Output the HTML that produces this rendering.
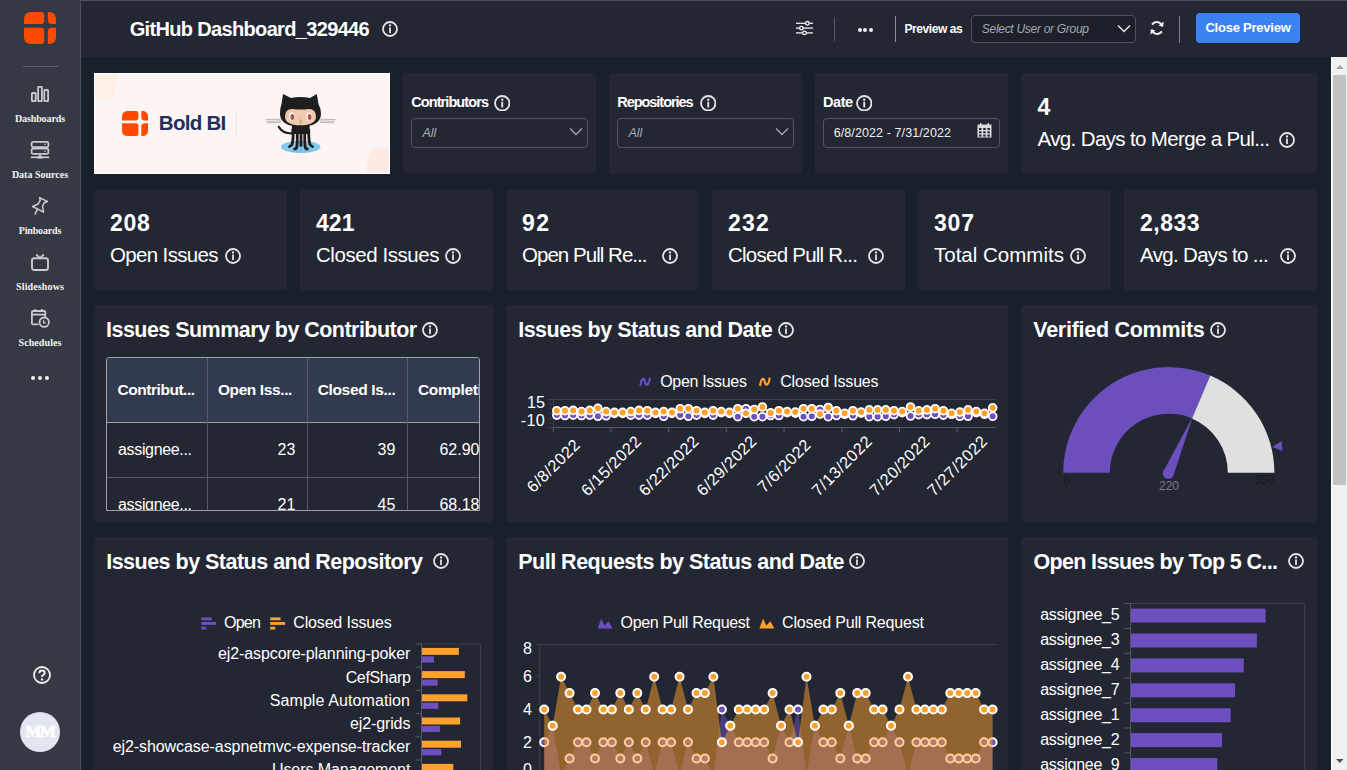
<!DOCTYPE html><html><head><meta charset="utf-8"><style>
html,body{margin:0;padding:0}
body{width:1347px;height:770px;overflow:hidden;background:#1a1f2c;position:relative;font-family:"Liberation Sans",sans-serif}
svg text{font-family:"Liberation Sans",sans-serif}
.t{position:absolute;white-space:nowrap}
.r{position:absolute}
</style></head><body>
<div class="r" style="left:0px;top:0px;width:80px;height:770px;background:#353944;"></div>
<div class="r" style="left:80px;top:0px;width:1px;height:770px;background:#4b505b;"></div>
<svg class="r" style="left:24px;top:12px" width="32" height="32" viewBox="0 0 32 32">
<path d="M0 12.1 V7.5 Q0 0 7.5 0 H17.2 Q20.2 0 20.2 3 V9.1 Q20.2 12.1 17.2 12.1 Z" fill="#ff4a00"/>
<path d="M23.8 0 H24.5 Q32 0 32 7.5 V12.1 H27.8 Q23.8 12.1 23.8 8.1 Z" fill="#ff4a00"/>
<path d="M0 15.7 H17.2 Q20.2 15.7 20.2 18.7 V29 Q20.2 32 17.2 32 H7.5 Q0 32 0 24.5 Z" fill="#ff4a00"/>
<path d="M27.8 15.7 H32 V24.5 Q32 32 24.5 32 H23.8 V19.7 Q23.8 15.7 27.8 15.7 Z" fill="#ff4a00"/>
</svg>
<div class="r" style="left:23px;top:66px;width:35px;height:1px;background:#5d616b;"></div>
<svg class="r" style="left:31px;top:86px" width="18" height="16" viewBox="0 0 18 16">
<rect x="0.9" y="7" width="3.8" height="8.1" rx="0.6" fill="none" stroke="#c9cbd0" stroke-width="1.8"/>
<rect x="7.1" y="0.9" width="3.8" height="14.2" rx="0.6" fill="none" stroke="#c9cbd0" stroke-width="1.8"/>
<rect x="13.3" y="4" width="3.8" height="11.1" rx="0.6" fill="none" stroke="#c9cbd0" stroke-width="1.8"/>
</svg>
<svg class="r" style="left:30px;top:141px" width="20" height="18" viewBox="0 0 20 18">
<rect x="1.6" y="0.9" width="16.8" height="5.2" rx="1.5" fill="none" stroke="#c9cbd0" stroke-width="1.8"/>
<rect x="1.6" y="7.7" width="16.8" height="5.2" rx="1.5" fill="none" stroke="#c9cbd0" stroke-width="1.8"/>
<line x1="10" y1="12.8" x2="10" y2="16" stroke="#c9cbd0" stroke-width="1.5"/>
<line x1="0.8" y1="16.3" x2="19.2" y2="16.3" stroke="#c9cbd0" stroke-width="1.7"/>
<rect x="7.5" y="15" width="5" height="2.6" fill="#c9cbd0"/>
<circle cx="15" cy="3.3" r="0.8" fill="#c9cbd0"/><circle cx="15" cy="10.3" r="0.8" fill="#c9cbd0"/>
</svg>
<svg class="r" style="left:31px;top:196px" width="18" height="20" viewBox="0 0 18 20">
<path d="M8.6 1.6 L16.4 5.5 L13 7 L11.5 10.6 L12.6 16.2 L1.6 10.5 L7 8 L9.2 4.4 Z" fill="none" stroke="#c9cbd0" stroke-width="1.5" stroke-linejoin="round"/>
<line x1="6.3" y1="13.5" x2="3.9" y2="18.5" stroke="#c9cbd0" stroke-width="1.7"/>
</svg>
<svg class="r" style="left:31px;top:253px" width="18" height="18" viewBox="0 0 18 18">
<rect x="1" y="5.2" width="16" height="11.8" rx="2.2" fill="none" stroke="#c9cbd0" stroke-width="1.9"/>
<path d="M5.2 1.5 L9 5 L12.8 1.5" fill="none" stroke="#c9cbd0" stroke-width="1.7"/>
</svg>
<svg class="r" style="left:30px;top:308px" width="20" height="20" viewBox="0 0 20 20">
<path d="M8.5 16.3 H3 Q1.9 16.3 1.9 15 V4.3 Q1.9 3 3 3 H14 Q15.3 3 15.3 4.3 V8.8" fill="none" stroke="#c9cbd0" stroke-width="1.8"/>
<line x1="2" y1="6.6" x2="15.2" y2="6.6" stroke="#c9cbd0" stroke-width="1.8"/>
<line x1="5.3" y1="1" x2="5.3" y2="4" stroke="#c9cbd0" stroke-width="1.7"/>
<line x1="11.8" y1="1" x2="11.8" y2="4" stroke="#c9cbd0" stroke-width="1.7"/>
<circle cx="14.2" cy="14.2" r="4.7" fill="#353944" stroke="#c9cbd0" stroke-width="1.8"/>
<path d="M13.6 12.2 V14.8 H15.8" fill="none" stroke="#c9cbd0" stroke-width="1.3"/>
</svg>
<div class="t" style="left:-160.0px;width:400px;text-align:center;top:113.5px;font-size:10px;line-height:10px;font-weight:bold;color:#f2f2f2;font-family:'Liberation Serif',serif;letter-spacing:-0.103px;text-indent:-0.103px;">Dashboards</div>
<div class="t" style="left:-160.0px;width:400px;text-align:center;top:169.5px;font-size:10px;line-height:10px;font-weight:bold;color:#f2f2f2;font-family:'Liberation Serif',serif;letter-spacing:-0.000px;text-indent:-0.000px;">Data Sources</div>
<div class="t" style="left:-160.0px;width:400px;text-align:center;top:225.5px;font-size:10px;line-height:10px;font-weight:bold;color:#f2f2f2;font-family:'Liberation Serif',serif;letter-spacing:-0.163px;text-indent:-0.163px;">Pinboards</div>
<div class="t" style="left:-160.0px;width:400px;text-align:center;top:281.5px;font-size:10px;line-height:10px;font-weight:bold;color:#f2f2f2;font-family:'Liberation Serif',serif;letter-spacing:0.124px;text-indent:0.124px;">Slideshows</div>
<div class="t" style="left:-160.0px;width:400px;text-align:center;top:337.5px;font-size:10px;line-height:10px;font-weight:bold;color:#f2f2f2;font-family:'Liberation Serif',serif;letter-spacing:0.096px;text-indent:0.096px;">Schedules</div>
<div class="r" style="left:31px;top:376px;width:4px;height:4px;border-radius:2px;background:#f2f2f2"></div>
<div class="r" style="left:38px;top:376px;width:4px;height:4px;border-radius:2px;background:#f2f2f2"></div>
<div class="r" style="left:45px;top:376px;width:4px;height:4px;border-radius:2px;background:#f2f2f2"></div>
<svg class="r" style="left:33px;top:666px" width="18" height="18" viewBox="0 0 18 18">
<circle cx="9" cy="9" r="8" fill="none" stroke="#f0f0f0" stroke-width="1.8"/>
<path d="M6.3 7.2 Q6.3 4.5 9 4.5 Q11.7 4.5 11.7 6.9 Q11.7 8.4 10 9.1 Q9 9.6 9 10.9" fill="none" stroke="#f0f0f0" stroke-width="2"/>
<circle cx="9" cy="13.4" r="1.2" fill="#f0f0f0"/>
</svg>
<div class="r" style="left:20px;top:712px;width:40px;height:40px;border-radius:20px;background:#e2e6f0"></div>
<div class="t" style="left:-159.5px;width:400px;text-align:center;top:723.1px;font-size:17px;line-height:17px;font-weight:bold;color:#ffffff;font-family:'Liberation Serif',serif;-webkit-text-stroke:0.6px #fff;letter-spacing:-1.590px;text-indent:-1.590px;">MM</div>
<div class="r" style="left:81px;top:0px;width:1266px;height:57px;background:#232733;"></div>
<div class="r" style="left:81px;top:0px;width:1266px;height:1px;background:#4b505b;"></div>
<div class="t" style="left:129.7px;top:18.9px;font-size:20px;line-height:20px;font-weight:bold;color:#fff;letter-spacing:-0.661px;">GitHub Dashboard_329446</div>
<svg class="r" style="left:381.7px;top:21.4px" width="16" height="16" viewBox="0 0 16 16"><circle cx="8" cy="8" r="7" fill="none" stroke="#e6e6e6" stroke-width="1.8"/><circle cx="8" cy="4.5" r="1.15" fill="#e6e6e6"/><rect x="7.1" y="6.5" width="1.8" height="5.6" fill="#e6e6e6"/></svg>
<svg class="r" style="left:796px;top:20px" width="17" height="16" viewBox="0 0 17 16">
<g stroke="#f0f0f0" stroke-width="1.3" fill="#232733">
<line x1="0" y1="3.3" x2="17" y2="3.3"/><line x1="0" y1="8.1" x2="17" y2="8.1"/><line x1="0" y1="12.9" x2="17" y2="12.9"/>
<circle cx="11.4" cy="3.3" r="1.8"/><circle cx="5.4" cy="8.1" r="1.8"/><circle cx="8.5" cy="12.9" r="1.8"/>
</g></svg>
<div class="r" style="left:834px;top:17px;width:1px;height:24px;background:#555a64;"></div>
<div class="r" style="left:857.5px;top:27.5px;width:4px;height:4px;border-radius:2px;background:#f0f0f0"></div>
<div class="r" style="left:863.3px;top:27.5px;width:4px;height:4px;border-radius:2px;background:#f0f0f0"></div>
<div class="r" style="left:869.0px;top:27.5px;width:4px;height:4px;border-radius:2px;background:#f0f0f0"></div>
<div class="r" style="left:895px;top:16px;width:1px;height:26px;background:#8a8e96;"></div>
<div class="t" style="left:904.4px;top:22.5px;font-size:12px;line-height:12px;font-weight:bold;color:#fff;letter-spacing:-0.405px;">Preview as</div>
<div class="r" style="left:971px;top:15px;width:163px;height:26px;border:1px solid #4d525c;border-radius:4px;background:#1c202b"></div>
<div class="t" style="left:981.8px;top:23.0px;font-size:12px;line-height:12px;font-weight:normal;color:#a4a8b0;font-style:italic;letter-spacing:-0.290px;">Select User or Group</div>
<svg class="r" style="left:1117px;top:24px" width="14" height="9" viewBox="0 0 14 9"><path d="M1 1.5 L7 7.5 L13 1.5" fill="none" stroke="#e8e8e8" stroke-width="1.4"/></svg>
<svg class="r" style="left:1149px;top:20px" width="16" height="16" viewBox="0 0 16 16">
<path d="M13.2 6.2 A5.6 5.6 0 0 0 3.1 4.6" fill="none" stroke="#f2f2f2" stroke-width="2"/>
<path d="M2.8 9.8 A5.6 5.6 0 0 0 12.9 11.4" fill="none" stroke="#f2f2f2" stroke-width="2"/>
<path d="M14.6 1.5 L14.2 6.8 L9.5 5.6 Z" fill="#f2f2f2"/>
<path d="M1.4 14.5 L1.8 9.2 L6.5 10.4 Z" fill="#f2f2f2"/>
</svg>
<div class="r" style="left:1179px;top:16px;width:1px;height:27px;background:#7d818a;"></div>
<div class="r" style="left:1196px;top:13px;width:104px;height:30px;border-radius:4px;background:#3b82f0"></div>
<div class="t" style="left:1205.4px;top:20.9px;font-size:13px;line-height:13px;font-weight:bold;color:#fff;letter-spacing:-0.230px;">Close Preview</div>
<svg class="r" style="left:94px;top:73px" width="296" height="101" viewBox="94 73 296 101"><rect x="94" y="73" width="296" height="101" fill="#fdf5f3"/><path d="M94 73 H118.5 Q116.5 85 114 93 Q111.5 99 105 99.5 Q100 99.5 94 97.5 Z" fill="#fdefe3"/><path d="M365.5 174 Q367.5 158 370.5 151 Q373.5 147 379 147.2 Q386 147.5 390 150 V174 Z" fill="#fdebe3"/><rect x="94.5" y="73.5" width="295" height="100" fill="none" stroke="#ffffff" stroke-width="1"/></svg>
<svg class="r" style="left:122px;top:111px" width="26" height="25" viewBox="0 0 32 32" preserveAspectRatio="none">
<path d="M0 12.1 V7.5 Q0 0 7.5 0 H17.2 Q20.2 0 20.2 3 V9.1 Q20.2 12.1 17.2 12.1 Z" fill="#ff4a00"/>
<path d="M23.8 0 H24.5 Q32 0 32 7.5 V12.1 H27.8 Q23.8 12.1 23.8 8.1 Z" fill="#ff4a00"/>
<path d="M0 15.7 H17.2 Q20.2 15.7 20.2 18.7 V29 Q20.2 32 17.2 32 H7.5 Q0 32 0 24.5 Z" fill="#ff4a00"/>
<path d="M27.8 15.7 H32 V24.5 Q32 32 24.5 32 H23.8 V19.7 Q23.8 15.7 27.8 15.7 Z" fill="#ff4a00"/>
</svg>
<div class="t" style="left:158.8px;top:113.3px;font-size:20.5px;line-height:20.5px;font-weight:bold;color:#1f2f5c;letter-spacing:-0.723px;">Bold BI</div>
<div class="r" style="left:236px;top:110px;width:1px;height:26px;background:#efe6e2;"></div>
<svg class="r" style="left:262px;top:90px" width="78" height="66" viewBox="262 90 78 66">
<ellipse cx="300.7" cy="146.9" rx="19.8" ry="6.1" fill="#82c9ef"/>
<g stroke="#6fb2e0" stroke-width="1.2"><line x1="293" y1="148" x2="293" y2="152.5"/><line x1="297" y1="149" x2="297" y2="153"/><line x1="301" y1="148" x2="301" y2="153"/><line x1="305" y1="149" x2="305" y2="153"/><line x1="309" y1="148" x2="309" y2="152.5"/></g>
<g stroke="#666" stroke-width="0.45" fill="none">
<path d="M265.5 119.6 L281 119.2"/><path d="M266 121.4 L281 120.9"/><path d="M267 123 L281 122.3"/>
<path d="M320 119.2 L335.5 119.6"/><path d="M320 120.9 L335 121.4"/><path d="M320 122.3 L334 123"/>
</g>
<path d="M278.8 126.8 Q282 133.5 292 133.5" fill="none" stroke="#1e1e1e" stroke-width="2.2" stroke-linecap="round"/>
<path d="M292 124 H309.5 L310 134 H291.5 Z" fill="#1e1e1e"/>
<g stroke="#1e1e1e" stroke-width="2.8" fill="none" stroke-linecap="round">
<path d="M293 130 Q293.5 140 292 144.5 Q291 146 289.5 146.5"/>
<path d="M297.2 131 Q297.5 142 296.8 147.5 Q296 148.8 294.8 149"/>
<path d="M301 131 Q301 140 301 145.5"/>
<path d="M304.8 131 Q304.5 142 305.2 147.5 Q306 148.8 307.2 149"/>
<path d="M308.8 130 Q308.5 140 310 144.5 Q311 146 312.5 146.5"/>
</g>
<path d="M281.5 104 L283 93.9 L291 98 Q300.5 96 310 98 L316.8 93.9 L318.5 104 Q321.3 109 321 114.5 Q320 126.6 300.5 126.6 Q281 126.6 280 114.5 Q279.7 109 281.5 104 Z" fill="#1e1e1e"/>
<path d="M285 116.5 Q285 109 292 108.9 Q300.5 110 309 108.9 Q316 109 316 116.5 Q316 125.3 300.5 125.3 Q285 125.3 285 116.5 Z" fill="#f0c8ac"/>
<ellipse cx="291.8" cy="116.6" rx="2.8" ry="4" fill="#fff"/>
<ellipse cx="309.1" cy="116.6" rx="2.8" ry="4" fill="#fff"/>
<ellipse cx="292.3" cy="117" rx="1.9" ry="2.9" fill="#a4584a"/>
<ellipse cx="309.6" cy="117" rx="1.9" ry="2.9" fill="#a4584a"/>
<circle cx="300.5" cy="120.3" r="0.7" fill="#b0604e"/>
<path d="M298.8 122.3 Q300.5 123.8 302.2 122.3" fill="none" stroke="#b0604e" stroke-width="0.5"/>
</svg>
<div class="r" style="left:403px;top:73px;width:193px;height:101px;background:#232733;border-radius:3px"></div>
<div class="t" style="left:411.2px;top:95.0px;font-size:14.5px;line-height:14.5px;font-weight:bold;color:#fff;letter-spacing:-0.909px;">Contributors</div>
<svg class="r" style="left:493.8px;top:94.8px" width="16.5" height="16.5" viewBox="0 0 16 16"><circle cx="8" cy="8" r="7" fill="none" stroke="#e6e6e6" stroke-width="1.8"/><circle cx="8" cy="4.5" r="1.15" fill="#e6e6e6"/><rect x="7.1" y="6.5" width="1.8" height="5.6" fill="#e6e6e6"/></svg>
<div class="r" style="left:411px;top:118px;width:175px;height:28px;border:1px solid #50555f;border-radius:4px"></div>
<div class="t" style="left:422.5px;top:126.6px;font-size:12.5px;line-height:12.5px;font-weight:normal;color:#a9adb5;font-style:italic;">All</div>
<svg class="r" style="left:569px;top:127px" width="14" height="9" viewBox="0 0 14 9"><path d="M1 1.5 L7 7.5 L13 1.5" fill="none" stroke="#a3a7ae" stroke-width="1.3"/></svg>
<div class="r" style="left:609px;top:73px;width:193px;height:101px;background:#232733;border-radius:3px"></div>
<div class="t" style="left:617.2px;top:95.0px;font-size:14.5px;line-height:14.5px;font-weight:bold;color:#fff;letter-spacing:-1.030px;">Repositories</div>
<svg class="r" style="left:699.8px;top:94.8px" width="16.5" height="16.5" viewBox="0 0 16 16"><circle cx="8" cy="8" r="7" fill="none" stroke="#e6e6e6" stroke-width="1.8"/><circle cx="8" cy="4.5" r="1.15" fill="#e6e6e6"/><rect x="7.1" y="6.5" width="1.8" height="5.6" fill="#e6e6e6"/></svg>
<div class="r" style="left:617px;top:118px;width:175px;height:28px;border:1px solid #50555f;border-radius:4px"></div>
<div class="t" style="left:628.5px;top:126.6px;font-size:12.5px;line-height:12.5px;font-weight:normal;color:#a9adb5;font-style:italic;">All</div>
<svg class="r" style="left:775px;top:127px" width="14" height="9" viewBox="0 0 14 9"><path d="M1 1.5 L7 7.5 L13 1.5" fill="none" stroke="#a3a7ae" stroke-width="1.3"/></svg>
<div class="r" style="left:815px;top:73px;width:193px;height:101px;background:#232733;border-radius:3px"></div>
<div class="t" style="left:823.1px;top:95.0px;font-size:14.5px;line-height:14.5px;font-weight:bold;color:#fff;letter-spacing:-0.477px;">Date</div>
<svg class="r" style="left:855.8px;top:94.8px" width="16.5" height="16.5" viewBox="0 0 16 16"><circle cx="8" cy="8" r="7" fill="none" stroke="#e6e6e6" stroke-width="1.8"/><circle cx="8" cy="4.5" r="1.15" fill="#e6e6e6"/><rect x="7.1" y="6.5" width="1.8" height="5.6" fill="#e6e6e6"/></svg>
<div class="r" style="left:823px;top:118px;width:175px;height:28px;border:1px solid #50555f;border-radius:4px"></div>
<div class="t" style="left:833.7px;top:126.9px;font-size:12.5px;line-height:12.5px;font-weight:normal;color:#f0f0f0;letter-spacing:0.101px;">6/8/2022 - 7/31/2022</div>
<svg class="r" style="left:977px;top:123px" width="15" height="15" viewBox="0 0 15 15">
<rect x="0.5" y="1.5" width="14" height="13" fill="#d8dade"/>
<g fill="#232733"><rect x="2" y="5" width="2.5" height="2"/><rect x="6.2" y="5" width="2.5" height="2"/><rect x="10.4" y="5" width="2.5" height="2"/>
<rect x="2" y="8.3" width="2.5" height="2"/><rect x="6.2" y="8.3" width="2.5" height="2"/><rect x="10.4" y="8.3" width="2.5" height="2"/>
<rect x="2" y="11.6" width="2.5" height="2"/><rect x="6.2" y="11.6" width="2.5" height="2"/><rect x="10.4" y="11.6" width="2.5" height="2"/></g>
<rect x="3" y="0" width="1.5" height="3" fill="#d8dade"/><rect x="10.5" y="0" width="1.5" height="3" fill="#d8dade"/>
</svg>
<div class="r" style="left:1021px;top:73px;width:296px;height:101px;background:#232733;border-radius:3px"></div>
<div class="t" style="left:1037.6px;top:96.0px;font-size:23px;line-height:23px;font-weight:bold;color:#fff;">4</div>
<div class="t" style="left:1037.6px;top:129.1px;font-size:20.5px;line-height:20.5px;font-weight:normal;color:#fff;letter-spacing:-0.644px;">Avg. Days to Merge a Pul...</div>
<svg class="r" style="left:1279.3px;top:132.0px" width="16" height="16" viewBox="0 0 16 16"><circle cx="8" cy="8" r="7" fill="none" stroke="#e6e6e6" stroke-width="1.8"/><circle cx="8" cy="4.5" r="1.15" fill="#e6e6e6"/><rect x="7.1" y="6.5" width="1.8" height="5.6" fill="#e6e6e6"/></svg>
<div class="r" style="left:94px;top:190px;width:193px;height:100px;background:#232733;border-radius:3px"></div>
<div class="t" style="left:110.0px;top:211.8px;font-size:23px;line-height:23px;font-weight:bold;color:#fff;letter-spacing:0.712px;">208</div>
<div class="t" style="left:110.0px;top:244.9px;font-size:20.5px;line-height:20.5px;font-weight:normal;color:#fff;letter-spacing:-0.649px;">Open Issues</div>
<svg class="r" style="left:224.7px;top:247.8px" width="16" height="16" viewBox="0 0 16 16"><circle cx="8" cy="8" r="7" fill="none" stroke="#e6e6e6" stroke-width="1.8"/><circle cx="8" cy="4.5" r="1.15" fill="#e6e6e6"/><rect x="7.1" y="6.5" width="1.8" height="5.6" fill="#e6e6e6"/></svg>
<div class="r" style="left:300px;top:190px;width:193px;height:100px;background:#232733;border-radius:3px"></div>
<div class="t" style="left:316.0px;top:211.8px;font-size:23px;line-height:23px;font-weight:bold;color:#fff;letter-spacing:0.062px;">421</div>
<div class="t" style="left:316.0px;top:244.9px;font-size:20.5px;line-height:20.5px;font-weight:normal;color:#fff;letter-spacing:-0.438px;">Closed Issues</div>
<svg class="r" style="left:445.0px;top:247.8px" width="16" height="16" viewBox="0 0 16 16"><circle cx="8" cy="8" r="7" fill="none" stroke="#e6e6e6" stroke-width="1.8"/><circle cx="8" cy="4.5" r="1.15" fill="#e6e6e6"/><rect x="7.1" y="6.5" width="1.8" height="5.6" fill="#e6e6e6"/></svg>
<div class="r" style="left:506px;top:190px;width:193px;height:100px;background:#232733;border-radius:3px"></div>
<div class="t" style="left:522.0px;top:211.8px;font-size:23px;line-height:23px;font-weight:bold;color:#fff;letter-spacing:1.416px;">92</div>
<div class="t" style="left:522.0px;top:244.9px;font-size:20.5px;line-height:20.5px;font-weight:normal;color:#fff;letter-spacing:-0.966px;">Open Pull Re...</div>
<svg class="r" style="left:662.0px;top:247.8px" width="16" height="16" viewBox="0 0 16 16"><circle cx="8" cy="8" r="7" fill="none" stroke="#e6e6e6" stroke-width="1.8"/><circle cx="8" cy="4.5" r="1.15" fill="#e6e6e6"/><rect x="7.1" y="6.5" width="1.8" height="5.6" fill="#e6e6e6"/></svg>
<div class="r" style="left:712px;top:190px;width:193px;height:100px;background:#232733;border-radius:3px"></div>
<div class="t" style="left:728.0px;top:211.8px;font-size:23px;line-height:23px;font-weight:bold;color:#fff;letter-spacing:1.212px;">232</div>
<div class="t" style="left:728.0px;top:244.9px;font-size:20.5px;line-height:20.5px;font-weight:normal;color:#fff;letter-spacing:-0.752px;">Closed Pull R...</div>
<svg class="r" style="left:868.0px;top:247.8px" width="16" height="16" viewBox="0 0 16 16"><circle cx="8" cy="8" r="7" fill="none" stroke="#e6e6e6" stroke-width="1.8"/><circle cx="8" cy="4.5" r="1.15" fill="#e6e6e6"/><rect x="7.1" y="6.5" width="1.8" height="5.6" fill="#e6e6e6"/></svg>
<div class="r" style="left:918px;top:190px;width:193px;height:100px;background:#232733;border-radius:3px"></div>
<div class="t" style="left:934.0px;top:211.8px;font-size:23px;line-height:23px;font-weight:bold;color:#fff;letter-spacing:0.812px;">307</div>
<div class="t" style="left:934.0px;top:244.9px;font-size:20.5px;line-height:20.5px;font-weight:normal;color:#fff;letter-spacing:0.003px;">Total Commits</div>
<svg class="r" style="left:1070.0px;top:247.8px" width="16" height="16" viewBox="0 0 16 16"><circle cx="8" cy="8" r="7" fill="none" stroke="#e6e6e6" stroke-width="1.8"/><circle cx="8" cy="4.5" r="1.15" fill="#e6e6e6"/><rect x="7.1" y="6.5" width="1.8" height="5.6" fill="#e6e6e6"/></svg>
<div class="r" style="left:1124px;top:190px;width:193px;height:100px;background:#232733;border-radius:3px"></div>
<div class="t" style="left:1140.0px;top:211.8px;font-size:23px;line-height:23px;font-weight:bold;color:#fff;letter-spacing:0.486px;">2,833</div>
<div class="t" style="left:1140.0px;top:244.9px;font-size:20.5px;line-height:20.5px;font-weight:normal;color:#fff;letter-spacing:-0.668px;">Avg. Days to ...</div>
<svg class="r" style="left:1280.0px;top:247.8px" width="16" height="16" viewBox="0 0 16 16"><circle cx="8" cy="8" r="7" fill="none" stroke="#e6e6e6" stroke-width="1.8"/><circle cx="8" cy="4.5" r="1.15" fill="#e6e6e6"/><rect x="7.1" y="6.5" width="1.8" height="5.6" fill="#e6e6e6"/></svg>
<div class="r" style="left:1331px;top:57px;width:16px;height:713px;background:#f1f1f1;"></div>
<div class="r" style="left:1331px;top:57px;width:1px;height:713px;background:#ffffff;"></div>
<div class="r" style="left:1333px;top:75px;width:13px;height:410px;background:#c1c1c1;"></div>
<svg class="r" style="left:1335.7px;top:64.9px" width="7.6" height="4" viewBox="0 0 7.6 4"><path d="M0 4 L3.8 0 L7.6 4 Z" fill="#a3a3a3"/></svg>
<svg class="r" style="left:1335.7px;top:759px" width="7.6" height="4" viewBox="0 0 7.6 4"><path d="M0 0 L3.8 4 L7.6 0 Z" fill="#505050"/></svg>
<div class="r" style="left:94px;top:305px;width:399px;height:217px;background:#232733;border-radius:3px"></div>
<div class="t" style="left:106.1px;top:319.8px;font-size:21.5px;line-height:21.5px;font-weight:bold;color:#fff;letter-spacing:-0.541px;">Issues Summary by Contributor</div>
<svg class="r" style="left:422.0px;top:321.5px" width="16" height="16" viewBox="0 0 16 16"><circle cx="8" cy="8" r="7" fill="none" stroke="#e6e6e6" stroke-width="1.8"/><circle cx="8" cy="4.5" r="1.15" fill="#e6e6e6"/><rect x="7.1" y="6.5" width="1.8" height="5.6" fill="#e6e6e6"/></svg>
<div class="r" style="left:106px;top:357px;width:372px;height:152px;overflow:hidden;border:1px solid #9ea2aa;border-radius:3px 3px 0 0"><div style="position:absolute;left:0;top:0;width:374px;height:64px;background:#313a4e;border-bottom:1px solid #9ea2aa"></div><div style="position:absolute;left:0;top:119px;width:374px;height:1px;background:#555a65"></div><div style="position:absolute;left:100px;top:0;width:1px;height:153px;background:#555a65"></div><div style="position:absolute;left:200px;top:0;width:1px;height:153px;background:#555a65"></div><div style="position:absolute;left:300px;top:0;width:1px;height:153px;background:#555a65"></div></div>
<div class="r" style="left:107px;top:358px;width:372px;height:152px;overflow:hidden">
<div class="t" style="left:10.5px;top:23.9px;font-size:15.5px;line-height:15.5px;font-weight:bold;color:#fff;letter-spacing:-0.459px;">Contribut...</div>
<div class="t" style="left:110.9px;top:23.9px;font-size:15.5px;line-height:15.5px;font-weight:bold;color:#fff;letter-spacing:-0.389px;">Open Iss...</div>
<div class="t" style="left:210.7px;top:23.9px;font-size:15.5px;line-height:15.5px;font-weight:bold;color:#fff;letter-spacing:-0.348px;">Closed Is...</div>
<div class="t" style="left:310.9px;top:23.9px;font-size:15.5px;line-height:15.5px;font-weight:bold;color:#fff;letter-spacing:-0.330px;">Completi</div>
<div class="t" style="left:11.0px;top:83.8px;font-size:16px;line-height:16px;font-weight:normal;color:#fff;letter-spacing:-0.338px;">assignee...</div>
<div class="t" style="left:-111.6px;width:300px;text-align:right;top:83.8px;font-size:16px;line-height:16px;font-weight:normal;color:#fff">23</div>
<div class="t" style="left:-11.7px;width:300px;text-align:right;top:83.8px;font-size:16px;line-height:16px;font-weight:normal;color:#fff">39</div>
<div class="t" style="left:72.5px;width:300px;text-align:right;top:83.8px;font-size:16px;line-height:16px;font-weight:normal;color:#fff">62.90</div>
<div class="t" style="left:11.0px;top:138.5px;font-size:16px;line-height:16px;font-weight:normal;color:#fff;letter-spacing:-0.338px;">assignee...</div>
<div class="t" style="left:-111.6px;width:300px;text-align:right;top:138.5px;font-size:16px;line-height:16px;font-weight:normal;color:#fff">21</div>
<div class="t" style="left:-11.7px;width:300px;text-align:right;top:138.5px;font-size:16px;line-height:16px;font-weight:normal;color:#fff">45</div>
<div class="t" style="left:72.5px;width:300px;text-align:right;top:138.5px;font-size:16px;line-height:16px;font-weight:normal;color:#fff">68.18</div>
</div>
<div class="r" style="left:506px;top:305px;width:502px;height:217px;background:#232733;border-radius:3px"></div>
<div class="t" style="left:518.2px;top:319.8px;font-size:21.5px;line-height:21.5px;font-weight:bold;color:#fff;letter-spacing:-0.502px;">Issues by Status and Date</div>
<svg class="r" style="left:777.9px;top:321.5px" width="16" height="16" viewBox="0 0 16 16"><circle cx="8" cy="8" r="7" fill="none" stroke="#e6e6e6" stroke-width="1.8"/><circle cx="8" cy="4.5" r="1.15" fill="#e6e6e6"/><rect x="7.1" y="6.5" width="1.8" height="5.6" fill="#e6e6e6"/></svg>
<svg class="r" style="left:506px;top:305px" width="502" height="217" viewBox="506 305 502 217">
<path d="M640.5 385 C641.5 377.5 644.5 377.5 645 381.8 C645.5 386 648.8 386 649.8 378.6" fill="none" stroke="#6d4fbf" stroke-width="2.2" stroke-linecap="round"/>
<path d="M760.2 385 C761.2 377.5 764.2 377.5 764.7 381.8 C765.2 386 768.5 386 769.5 378.6" fill="none" stroke="#ffa12b" stroke-width="2.2" stroke-linecap="round"/>
<text x="660.2" y="386.5" font-size="16" letter-spacing="-0.313" fill="#fff" text-anchor="start">Open Issues</text>
<text x="780.2" y="386.5" font-size="16" letter-spacing="-0.174" fill="#fff" text-anchor="start">Closed Issues</text>
<line x1="553" y1="399.5" x2="996" y2="399.5" stroke="#3a3f4a" stroke-width="1"/>
<line x1="553.5" y1="399" x2="553.5" y2="428" stroke="#3a3f4a" stroke-width="1"/>
<line x1="553" y1="427.5" x2="996" y2="427.5" stroke="#555a65" stroke-width="1"/>
<line x1="548.5" y1="399.5" x2="553" y2="399.5" stroke="#3a3f4a" stroke-width="1"/>
<line x1="548.5" y1="404.3" x2="553" y2="404.3" stroke="#3a3f4a" stroke-width="1"/>
<line x1="548.5" y1="409" x2="553" y2="409" stroke="#3a3f4a" stroke-width="1"/>
<line x1="548.5" y1="413.8" x2="553" y2="413.8" stroke="#3a3f4a" stroke-width="1"/>
<line x1="548.5" y1="418.5" x2="553" y2="418.5" stroke="#3a3f4a" stroke-width="1"/>
<line x1="548.5" y1="423.2" x2="553" y2="423.2" stroke="#3a3f4a" stroke-width="1"/>
<line x1="548.5" y1="427.5" x2="553" y2="427.5" stroke="#3a3f4a" stroke-width="1"/>
<text x="545" y="408" font-size="16.2" fill="#fff" text-anchor="end">15</text>
<text x="545" y="426.3" font-size="16.2" fill="#fff" text-anchor="end" letter-spacing="0.3">-10</text>
<line x1="553.3" y1="427.5" x2="553.3" y2="432.5" stroke="#555a65" stroke-width="1"/>
<text x="553.3" y="465.5" dy="5.8" font-size="16.3" letter-spacing="0.55" fill="#fff" text-anchor="middle" transform="rotate(-45 553.3 465.5)">6/8/2022</text>
<line x1="611.0" y1="427.5" x2="611.0" y2="432.5" stroke="#555a65" stroke-width="1"/>
<text x="611.0" y="465.5" dy="5.8" font-size="16.3" letter-spacing="0.55" fill="#fff" text-anchor="middle" transform="rotate(-45 611.0 465.5)">6/15/2022</text>
<line x1="668.7" y1="427.5" x2="668.7" y2="432.5" stroke="#555a65" stroke-width="1"/>
<text x="668.7" y="465.5" dy="5.8" font-size="16.3" letter-spacing="0.55" fill="#fff" text-anchor="middle" transform="rotate(-45 668.7 465.5)">6/22/2022</text>
<line x1="726.4" y1="427.5" x2="726.4" y2="432.5" stroke="#555a65" stroke-width="1"/>
<text x="726.4" y="465.5" dy="5.8" font-size="16.3" letter-spacing="0.55" fill="#fff" text-anchor="middle" transform="rotate(-45 726.4 465.5)">6/29/2022</text>
<line x1="784.1" y1="427.5" x2="784.1" y2="432.5" stroke="#555a65" stroke-width="1"/>
<text x="784.1" y="465.5" dy="5.8" font-size="16.3" letter-spacing="0.55" fill="#fff" text-anchor="middle" transform="rotate(-45 784.1 465.5)">7/6/2022</text>
<line x1="841.8" y1="427.5" x2="841.8" y2="432.5" stroke="#555a65" stroke-width="1"/>
<text x="841.8" y="465.5" dy="5.8" font-size="16.3" letter-spacing="0.55" fill="#fff" text-anchor="middle" transform="rotate(-45 841.8 465.5)">7/13/2022</text>
<line x1="899.5" y1="427.5" x2="899.5" y2="432.5" stroke="#555a65" stroke-width="1"/>
<text x="899.5" y="465.5" dy="5.8" font-size="16.3" letter-spacing="0.55" fill="#fff" text-anchor="middle" transform="rotate(-45 899.5 465.5)">7/20/2022</text>
<line x1="957.2" y1="427.5" x2="957.2" y2="432.5" stroke="#555a65" stroke-width="1"/>
<text x="957.2" y="465.5" dy="5.8" font-size="16.3" letter-spacing="0.55" fill="#fff" text-anchor="middle" transform="rotate(-45 957.2 465.5)">7/27/2022</text>
<polyline points="556.8,415.1 565.0,415.5 573.2,415.1 581.5,415.5 589.7,415.1 597.9,416.3 606.1,415.8 614.4,413.4 622.6,413.4 630.8,415.1 639.0,415.1 647.3,415.1 655.5,413.4 663.7,416.3 671.9,413.4 680.2,415.1 688.4,416.3 696.6,415.1 704.8,413.4 713.1,415.1 721.3,412.6 729.5,413.4 737.8,416.7 746.0,408.7 754.2,416.7 762.4,416.7 770.6,415.5 778.9,415.5 787.1,412.6 795.3,413.1 803.5,416.7 811.8,416.3 820.0,409.5 828.2,416.7 836.4,415.5 844.7,414.3 852.9,415.8 861.1,413.1 869.3,416.7 877.6,416.7 885.8,416.3 894.0,414.6 902.2,412.6 910.5,416.0 918.7,414.6 926.9,414.6 935.1,414.3 943.4,415.1 951.6,414.3 959.8,416.3 968.0,416.3 976.3,412.6 984.5,414.3 992.7,416.3" fill="none" stroke="#6d4fbf" stroke-width="2"/>
<circle cx="556.8" cy="415.1" r="3.9" fill="#6d4fbf" stroke="#fff" stroke-width="1.8"/>
<circle cx="565.0" cy="415.5" r="3.9" fill="#6d4fbf" stroke="#fff" stroke-width="1.8"/>
<circle cx="573.2" cy="415.1" r="3.9" fill="#6d4fbf" stroke="#fff" stroke-width="1.8"/>
<circle cx="581.5" cy="415.5" r="3.9" fill="#6d4fbf" stroke="#fff" stroke-width="1.8"/>
<circle cx="589.7" cy="415.1" r="3.9" fill="#6d4fbf" stroke="#fff" stroke-width="1.8"/>
<circle cx="597.9" cy="416.3" r="3.9" fill="#6d4fbf" stroke="#fff" stroke-width="1.8"/>
<circle cx="606.1" cy="415.8" r="3.9" fill="#6d4fbf" stroke="#fff" stroke-width="1.8"/>
<circle cx="614.4" cy="413.4" r="3.9" fill="#6d4fbf" stroke="#fff" stroke-width="1.8"/>
<circle cx="622.6" cy="413.4" r="3.9" fill="#6d4fbf" stroke="#fff" stroke-width="1.8"/>
<circle cx="630.8" cy="415.1" r="3.9" fill="#6d4fbf" stroke="#fff" stroke-width="1.8"/>
<circle cx="639.0" cy="415.1" r="3.9" fill="#6d4fbf" stroke="#fff" stroke-width="1.8"/>
<circle cx="647.3" cy="415.1" r="3.9" fill="#6d4fbf" stroke="#fff" stroke-width="1.8"/>
<circle cx="655.5" cy="413.4" r="3.9" fill="#6d4fbf" stroke="#fff" stroke-width="1.8"/>
<circle cx="663.7" cy="416.3" r="3.9" fill="#6d4fbf" stroke="#fff" stroke-width="1.8"/>
<circle cx="671.9" cy="413.4" r="3.9" fill="#6d4fbf" stroke="#fff" stroke-width="1.8"/>
<circle cx="680.2" cy="415.1" r="3.9" fill="#6d4fbf" stroke="#fff" stroke-width="1.8"/>
<circle cx="688.4" cy="416.3" r="3.9" fill="#6d4fbf" stroke="#fff" stroke-width="1.8"/>
<circle cx="696.6" cy="415.1" r="3.9" fill="#6d4fbf" stroke="#fff" stroke-width="1.8"/>
<circle cx="704.8" cy="413.4" r="3.9" fill="#6d4fbf" stroke="#fff" stroke-width="1.8"/>
<circle cx="713.1" cy="415.1" r="3.9" fill="#6d4fbf" stroke="#fff" stroke-width="1.8"/>
<circle cx="721.3" cy="412.6" r="3.9" fill="#6d4fbf" stroke="#fff" stroke-width="1.8"/>
<circle cx="729.5" cy="413.4" r="3.9" fill="#6d4fbf" stroke="#fff" stroke-width="1.8"/>
<circle cx="737.8" cy="416.7" r="3.9" fill="#6d4fbf" stroke="#fff" stroke-width="1.8"/>
<circle cx="746.0" cy="408.7" r="3.9" fill="#6d4fbf" stroke="#fff" stroke-width="1.8"/>
<circle cx="754.2" cy="416.7" r="3.9" fill="#6d4fbf" stroke="#fff" stroke-width="1.8"/>
<circle cx="762.4" cy="416.7" r="3.9" fill="#6d4fbf" stroke="#fff" stroke-width="1.8"/>
<circle cx="770.6" cy="415.5" r="3.9" fill="#6d4fbf" stroke="#fff" stroke-width="1.8"/>
<circle cx="778.9" cy="415.5" r="3.9" fill="#6d4fbf" stroke="#fff" stroke-width="1.8"/>
<circle cx="787.1" cy="412.6" r="3.9" fill="#6d4fbf" stroke="#fff" stroke-width="1.8"/>
<circle cx="795.3" cy="413.1" r="3.9" fill="#6d4fbf" stroke="#fff" stroke-width="1.8"/>
<circle cx="803.5" cy="416.7" r="3.9" fill="#6d4fbf" stroke="#fff" stroke-width="1.8"/>
<circle cx="811.8" cy="416.3" r="3.9" fill="#6d4fbf" stroke="#fff" stroke-width="1.8"/>
<circle cx="820.0" cy="409.5" r="3.9" fill="#6d4fbf" stroke="#fff" stroke-width="1.8"/>
<circle cx="828.2" cy="416.7" r="3.9" fill="#6d4fbf" stroke="#fff" stroke-width="1.8"/>
<circle cx="836.4" cy="415.5" r="3.9" fill="#6d4fbf" stroke="#fff" stroke-width="1.8"/>
<circle cx="844.7" cy="414.3" r="3.9" fill="#6d4fbf" stroke="#fff" stroke-width="1.8"/>
<circle cx="852.9" cy="415.8" r="3.9" fill="#6d4fbf" stroke="#fff" stroke-width="1.8"/>
<circle cx="861.1" cy="413.1" r="3.9" fill="#6d4fbf" stroke="#fff" stroke-width="1.8"/>
<circle cx="869.3" cy="416.7" r="3.9" fill="#6d4fbf" stroke="#fff" stroke-width="1.8"/>
<circle cx="877.6" cy="416.7" r="3.9" fill="#6d4fbf" stroke="#fff" stroke-width="1.8"/>
<circle cx="885.8" cy="416.3" r="3.9" fill="#6d4fbf" stroke="#fff" stroke-width="1.8"/>
<circle cx="894.0" cy="414.6" r="3.9" fill="#6d4fbf" stroke="#fff" stroke-width="1.8"/>
<circle cx="902.2" cy="412.6" r="3.9" fill="#6d4fbf" stroke="#fff" stroke-width="1.8"/>
<circle cx="910.5" cy="416.0" r="3.9" fill="#6d4fbf" stroke="#fff" stroke-width="1.8"/>
<circle cx="918.7" cy="414.6" r="3.9" fill="#6d4fbf" stroke="#fff" stroke-width="1.8"/>
<circle cx="926.9" cy="414.6" r="3.9" fill="#6d4fbf" stroke="#fff" stroke-width="1.8"/>
<circle cx="935.1" cy="414.3" r="3.9" fill="#6d4fbf" stroke="#fff" stroke-width="1.8"/>
<circle cx="943.4" cy="415.1" r="3.9" fill="#6d4fbf" stroke="#fff" stroke-width="1.8"/>
<circle cx="951.6" cy="414.3" r="3.9" fill="#6d4fbf" stroke="#fff" stroke-width="1.8"/>
<circle cx="959.8" cy="416.3" r="3.9" fill="#6d4fbf" stroke="#fff" stroke-width="1.8"/>
<circle cx="968.0" cy="416.3" r="3.9" fill="#6d4fbf" stroke="#fff" stroke-width="1.8"/>
<circle cx="976.3" cy="412.6" r="3.9" fill="#6d4fbf" stroke="#fff" stroke-width="1.8"/>
<circle cx="984.5" cy="414.3" r="3.9" fill="#6d4fbf" stroke="#fff" stroke-width="1.8"/>
<circle cx="992.7" cy="416.3" r="3.9" fill="#6d4fbf" stroke="#fff" stroke-width="1.8"/>
<polyline points="556.8,410.7 565.0,410.7 573.2,410.4 581.5,411.6 589.7,410.4 597.9,408.3 606.1,411.6 614.4,412.4 622.6,412.4 630.8,411.6 639.0,410.4 647.3,410.7 655.5,412.4 663.7,411.6 671.9,412.4 680.2,408.7 688.4,408.7 696.6,410.7 704.8,412.4 713.1,410.7 721.3,411.6 729.5,412.4 737.8,408.7 746.0,413.3 754.2,409.5 762.4,407.0 770.6,412.9 778.9,410.7 787.1,411.6 795.3,412.1 803.5,408.7 811.8,408.7 820.0,414.1 828.2,407.5 836.4,410.7 844.7,413.3 852.9,410.7 861.1,412.1 869.3,409.9 877.6,409.9 885.8,409.9 894.0,410.7 902.2,411.6 910.5,407.0 918.7,410.7 926.9,409.9 935.1,408.7 943.4,410.7 951.6,413.3 959.8,412.1 968.0,409.9 976.3,411.6 984.5,413.3 992.7,407.8" fill="none" stroke="#ffa12b" stroke-width="2"/>
<circle cx="556.8" cy="410.7" r="3.9" fill="#ffa12b" stroke="#fff" stroke-width="1.8"/>
<circle cx="565.0" cy="410.7" r="3.9" fill="#ffa12b" stroke="#fff" stroke-width="1.8"/>
<circle cx="573.2" cy="410.4" r="3.9" fill="#ffa12b" stroke="#fff" stroke-width="1.8"/>
<circle cx="581.5" cy="411.6" r="3.9" fill="#ffa12b" stroke="#fff" stroke-width="1.8"/>
<circle cx="589.7" cy="410.4" r="3.9" fill="#ffa12b" stroke="#fff" stroke-width="1.8"/>
<circle cx="597.9" cy="408.3" r="3.9" fill="#ffa12b" stroke="#fff" stroke-width="1.8"/>
<circle cx="606.1" cy="411.6" r="3.9" fill="#ffa12b" stroke="#fff" stroke-width="1.8"/>
<circle cx="614.4" cy="412.4" r="3.9" fill="#ffa12b" stroke="#fff" stroke-width="1.8"/>
<circle cx="622.6" cy="412.4" r="3.9" fill="#ffa12b" stroke="#fff" stroke-width="1.8"/>
<circle cx="630.8" cy="411.6" r="3.9" fill="#ffa12b" stroke="#fff" stroke-width="1.8"/>
<circle cx="639.0" cy="410.4" r="3.9" fill="#ffa12b" stroke="#fff" stroke-width="1.8"/>
<circle cx="647.3" cy="410.7" r="3.9" fill="#ffa12b" stroke="#fff" stroke-width="1.8"/>
<circle cx="655.5" cy="412.4" r="3.9" fill="#ffa12b" stroke="#fff" stroke-width="1.8"/>
<circle cx="663.7" cy="411.6" r="3.9" fill="#ffa12b" stroke="#fff" stroke-width="1.8"/>
<circle cx="671.9" cy="412.4" r="3.9" fill="#ffa12b" stroke="#fff" stroke-width="1.8"/>
<circle cx="680.2" cy="408.7" r="3.9" fill="#ffa12b" stroke="#fff" stroke-width="1.8"/>
<circle cx="688.4" cy="408.7" r="3.9" fill="#ffa12b" stroke="#fff" stroke-width="1.8"/>
<circle cx="696.6" cy="410.7" r="3.9" fill="#ffa12b" stroke="#fff" stroke-width="1.8"/>
<circle cx="704.8" cy="412.4" r="3.9" fill="#ffa12b" stroke="#fff" stroke-width="1.8"/>
<circle cx="713.1" cy="410.7" r="3.9" fill="#ffa12b" stroke="#fff" stroke-width="1.8"/>
<circle cx="721.3" cy="411.6" r="3.9" fill="#ffa12b" stroke="#fff" stroke-width="1.8"/>
<circle cx="729.5" cy="412.4" r="3.9" fill="#ffa12b" stroke="#fff" stroke-width="1.8"/>
<circle cx="737.8" cy="408.7" r="3.9" fill="#ffa12b" stroke="#fff" stroke-width="1.8"/>
<circle cx="746.0" cy="413.3" r="3.9" fill="#ffa12b" stroke="#fff" stroke-width="1.8"/>
<circle cx="754.2" cy="409.5" r="3.9" fill="#ffa12b" stroke="#fff" stroke-width="1.8"/>
<circle cx="762.4" cy="407.0" r="3.9" fill="#ffa12b" stroke="#fff" stroke-width="1.8"/>
<circle cx="770.6" cy="412.9" r="3.9" fill="#ffa12b" stroke="#fff" stroke-width="1.8"/>
<circle cx="778.9" cy="410.7" r="3.9" fill="#ffa12b" stroke="#fff" stroke-width="1.8"/>
<circle cx="787.1" cy="411.6" r="3.9" fill="#ffa12b" stroke="#fff" stroke-width="1.8"/>
<circle cx="795.3" cy="412.1" r="3.9" fill="#ffa12b" stroke="#fff" stroke-width="1.8"/>
<circle cx="803.5" cy="408.7" r="3.9" fill="#ffa12b" stroke="#fff" stroke-width="1.8"/>
<circle cx="811.8" cy="408.7" r="3.9" fill="#ffa12b" stroke="#fff" stroke-width="1.8"/>
<circle cx="820.0" cy="414.1" r="3.9" fill="#ffa12b" stroke="#fff" stroke-width="1.8"/>
<circle cx="828.2" cy="407.5" r="3.9" fill="#ffa12b" stroke="#fff" stroke-width="1.8"/>
<circle cx="836.4" cy="410.7" r="3.9" fill="#ffa12b" stroke="#fff" stroke-width="1.8"/>
<circle cx="844.7" cy="413.3" r="3.9" fill="#ffa12b" stroke="#fff" stroke-width="1.8"/>
<circle cx="852.9" cy="410.7" r="3.9" fill="#ffa12b" stroke="#fff" stroke-width="1.8"/>
<circle cx="861.1" cy="412.1" r="3.9" fill="#ffa12b" stroke="#fff" stroke-width="1.8"/>
<circle cx="869.3" cy="409.9" r="3.9" fill="#ffa12b" stroke="#fff" stroke-width="1.8"/>
<circle cx="877.6" cy="409.9" r="3.9" fill="#ffa12b" stroke="#fff" stroke-width="1.8"/>
<circle cx="885.8" cy="409.9" r="3.9" fill="#ffa12b" stroke="#fff" stroke-width="1.8"/>
<circle cx="894.0" cy="410.7" r="3.9" fill="#ffa12b" stroke="#fff" stroke-width="1.8"/>
<circle cx="902.2" cy="411.6" r="3.9" fill="#ffa12b" stroke="#fff" stroke-width="1.8"/>
<circle cx="910.5" cy="407.0" r="3.9" fill="#ffa12b" stroke="#fff" stroke-width="1.8"/>
<circle cx="918.7" cy="410.7" r="3.9" fill="#ffa12b" stroke="#fff" stroke-width="1.8"/>
<circle cx="926.9" cy="409.9" r="3.9" fill="#ffa12b" stroke="#fff" stroke-width="1.8"/>
<circle cx="935.1" cy="408.7" r="3.9" fill="#ffa12b" stroke="#fff" stroke-width="1.8"/>
<circle cx="943.4" cy="410.7" r="3.9" fill="#ffa12b" stroke="#fff" stroke-width="1.8"/>
<circle cx="951.6" cy="413.3" r="3.9" fill="#ffa12b" stroke="#fff" stroke-width="1.8"/>
<circle cx="959.8" cy="412.1" r="3.9" fill="#ffa12b" stroke="#fff" stroke-width="1.8"/>
<circle cx="968.0" cy="409.9" r="3.9" fill="#ffa12b" stroke="#fff" stroke-width="1.8"/>
<circle cx="976.3" cy="411.6" r="3.9" fill="#ffa12b" stroke="#fff" stroke-width="1.8"/>
<circle cx="984.5" cy="413.3" r="3.9" fill="#ffa12b" stroke="#fff" stroke-width="1.8"/>
<circle cx="992.7" cy="407.8" r="3.9" fill="#ffa12b" stroke="#fff" stroke-width="1.8"/>
</svg>
<div class="r" style="left:1021px;top:305px;width:296px;height:217px;background:#232733;border-radius:3px"></div>
<div class="t" style="left:1033.3px;top:319.8px;font-size:21.5px;line-height:21.5px;font-weight:bold;color:#fff;letter-spacing:-0.276px;">Verified Commits</div>
<svg class="r" style="left:1209.6px;top:321.5px" width="16" height="16" viewBox="0 0 16 16"><circle cx="8" cy="8" r="7" fill="none" stroke="#e6e6e6" stroke-width="1.8"/><circle cx="8" cy="4.5" r="1.15" fill="#e6e6e6"/><rect x="7.1" y="6.5" width="1.8" height="5.6" fill="#e6e6e6"/></svg>
<svg class="r" style="left:1021px;top:305px" width="295" height="217" viewBox="1021 305 295 217">
<path d="M1063.2 472.7 A105.6 105.6 0 0 1 1210.3 375.6 L1192.0 418.4 A59 59 0 0 0 1109.8 472.7 Z" fill="#6c4fbd"/>
<path d="M1210.3 375.6 A105.6 105.6 0 0 1 1274.4 472.7 L1227.8 472.7 A59 59 0 0 0 1192.0 418.4 Z" fill="#e0e0e0"/>
<path d="M1173.7 474.8 L1192.6 417.1 L1163.9 470.6 Z" fill="#6c4fbd"/>
<circle cx="1168.3" cy="473.2" r="5.6" fill="#6c4fbd"/>
<path d="M1272.3 447 L1281.5 441 L1282.5 451 Z" fill="#6c4fbd"/>
<text x="1067" y="485" font-size="12" fill="#1a1a1a" text-anchor="middle">0</text>
<text x="1169" y="489.5" font-size="12" fill="#7a7d85" text-anchor="middle">220</text>
<text x="1274.4" y="484" font-size="12" fill="#1a1a1a" text-anchor="end">350</text>
</svg>
<div class="r" style="left:94px;top:537px;width:399px;height:240px;background:#232733;border-radius:3px"></div>
<div class="t" style="left:106.2px;top:552.3px;font-size:21.5px;line-height:21.5px;font-weight:bold;color:#fff;letter-spacing:-0.512px;">Issues by Status and Repository</div>
<svg class="r" style="left:432.8px;top:553.2px" width="16" height="16" viewBox="0 0 16 16"><circle cx="8" cy="8" r="7" fill="none" stroke="#e6e6e6" stroke-width="1.8"/><circle cx="8" cy="4.5" r="1.15" fill="#e6e6e6"/><rect x="7.1" y="6.5" width="1.8" height="5.6" fill="#e6e6e6"/></svg>
<svg class="r" style="left:94px;top:537px" width="399" height="233" viewBox="94 537 399 233">
<rect x="201.3" y="617.4" width="10.4" height="2.9" fill="#6d4fbf"/><rect x="201.3" y="622.0" width="14.8" height="2.9" fill="#6d4fbf"/><rect x="201.3" y="626.7" width="5.1" height="2.9" fill="#6d4fbf"/>
<rect x="270.2" y="617.4" width="10.4" height="2.9" fill="#ffa12b"/><rect x="270.2" y="622.0" width="14.8" height="2.9" fill="#ffa12b"/><rect x="270.2" y="626.7" width="5.1" height="2.9" fill="#ffa12b"/>
<text x="224.0" y="628.1" font-size="16" letter-spacing="-0.747" fill="#fff" text-anchor="start">Open</text>
<text x="293.3" y="628.1" font-size="16" letter-spacing="-0.166" fill="#fff" text-anchor="start">Closed Issues</text>
<line x1="421" y1="644" x2="480.5" y2="644" stroke="#3a3f4a"/>
<line x1="480.5" y1="644" x2="480.5" y2="770" stroke="#3a3f4a"/>
<line x1="421.5" y1="644" x2="421.5" y2="770" stroke="#555a65"/>
<line x1="415.5" y1="644.0" x2="421.5" y2="644.0" stroke="#555a65"/>
<text x="410.3" y="659.4" font-size="16" letter-spacing="-0.096" fill="#fff" text-anchor="end">ej2-aspcore-planning-poker</text>
<rect x="422" y="647.9" width="36.9" height="7" fill="#ffa12b"/>
<rect x="422" y="656.3" width="11.9" height="6.2" fill="#6d4fbf"/>
<line x1="415.5" y1="667.2" x2="421.5" y2="667.2" stroke="#555a65"/>
<text x="410.5" y="682.6" font-size="16" letter-spacing="-0.342" fill="#fff" text-anchor="end">CefSharp</text>
<rect x="422" y="671.1" width="42.8" height="7" fill="#ffa12b"/>
<rect x="422" y="679.5" width="15.7" height="6.2" fill="#6d4fbf"/>
<line x1="415.5" y1="690.4" x2="421.5" y2="690.4" stroke="#555a65"/>
<text x="410.1" y="705.8" font-size="16" letter-spacing="0.097" fill="#fff" text-anchor="end">Sample Automation</text>
<rect x="422" y="694.3" width="45.3" height="7" fill="#ffa12b"/>
<rect x="422" y="702.7" width="16.3" height="6.2" fill="#6d4fbf"/>
<line x1="415.5" y1="713.6" x2="421.5" y2="713.6" stroke="#555a65"/>
<text x="410.3" y="729.0" font-size="16" letter-spacing="-0.108" fill="#fff" text-anchor="end">ej2-grids</text>
<rect x="422" y="717.5" width="38.1" height="7" fill="#ffa12b"/>
<rect x="422" y="725.9" width="17.9" height="6.2" fill="#6d4fbf"/>
<line x1="415.5" y1="736.8" x2="421.5" y2="736.8" stroke="#555a65"/>
<text x="410.3" y="752.2" font-size="16" letter-spacing="-0.078" fill="#fff" text-anchor="end">ej2-showcase-aspnetmvc-expense-tracker</text>
<rect x="422" y="740.7" width="39.0" height="7" fill="#ffa12b"/>
<rect x="422" y="749.1" width="19.4" height="6.2" fill="#6d4fbf"/>
<line x1="415.5" y1="760.0" x2="421.5" y2="760.0" stroke="#555a65"/>
<text x="410.3" y="775.4" font-size="16" letter-spacing="-0.081" fill="#fff" text-anchor="end">Users Management</text>
<rect x="422" y="763.9" width="31.3" height="7" fill="#ffa12b"/>
<rect x="422" y="772.3" width="14.0" height="6.2" fill="#6d4fbf"/>
</svg>
<div class="r" style="left:506px;top:537px;width:502px;height:240px;background:#232733;border-radius:3px"></div>
<div class="t" style="left:518.2px;top:552.3px;font-size:21.5px;line-height:21.5px;font-weight:bold;color:#fff;letter-spacing:-0.494px;">Pull Requests by Status and Date</div>
<svg class="r" style="left:849.0px;top:553.2px" width="16" height="16" viewBox="0 0 16 16"><circle cx="8" cy="8" r="7" fill="none" stroke="#e6e6e6" stroke-width="1.8"/><circle cx="8" cy="4.5" r="1.15" fill="#e6e6e6"/><rect x="7.1" y="6.5" width="1.8" height="5.6" fill="#e6e6e6"/></svg>
<svg class="r" style="left:506px;top:537px" width="502" height="233" viewBox="506 537 502 233">
<path d="M597.6 628.6 L601.2 618.7 L604.6 625.5 L608.5 621.3 L612.5 628.6 Z" fill="#6d4fbf"/>
<path d="M759.4 628.6 L763 618.7 L766.4 625.5 L770.3 621.3 L774.3 628.6 Z" fill="#ffa12b"/>
<text x="620.5" y="627.8" font-size="16" letter-spacing="-0.300" fill="#fff" text-anchor="start">Open Pull Request</text>
<text x="782.1" y="627.8" font-size="16" letter-spacing="-0.171" fill="#fff" text-anchor="start">Closed Pull Request</text>
<line x1="540" y1="644.5" x2="996" y2="644.5" stroke="#3a3f4a"/>
<line x1="539.7" y1="644.5" x2="539.7" y2="770" stroke="#3a3f4a"/>
<line x1="536.5" y1="644.0" x2="540" y2="644.0" stroke="#3a3f4a"/>
<text x="531.8" y="653.7" font-size="16" fill="#fff" text-anchor="end">8</text>
<line x1="536.5" y1="676.7" x2="540" y2="676.7" stroke="#3a3f4a"/>
<text x="531.8" y="682.2" font-size="16" fill="#fff" text-anchor="end">6</text>
<line x1="536.5" y1="709.5" x2="540" y2="709.5" stroke="#3a3f4a"/>
<text x="531.8" y="715.0" font-size="16" fill="#fff" text-anchor="end">4</text>
<line x1="536.5" y1="742.2" x2="540" y2="742.2" stroke="#3a3f4a"/>
<text x="531.8" y="747.7" font-size="16" fill="#fff" text-anchor="end">2</text>
<line x1="536.5" y1="774.9" x2="540" y2="774.9" stroke="#3a3f4a"/>
<text x="531.8" y="774.9" font-size="16" fill="#fff" text-anchor="end">0</text>
<path d="M544.2 774.9 L544.2 742.2 L552.7 725.8 L561.1 774.9 L569.6 758.5 L578.0 742.2 L586.5 742.2 L595.0 758.5 L603.4 742.2 L611.9 742.2 L620.3 758.5 L628.8 742.2 L637.3 758.5 L645.7 742.2 L654.2 774.9 L662.6 742.2 L671.1 742.2 L679.6 774.9 L688.0 742.2 L696.5 758.5 L704.9 758.5 L713.4 774.9 L721.9 709.5 L730.3 725.8 L738.8 742.2 L747.2 742.2 L755.7 742.2 L764.2 742.2 L772.6 758.5 L781.1 725.8 L789.5 742.2 L798.0 709.5 L806.5 774.9 L814.9 725.8 L823.4 742.2 L831.8 742.2 L840.3 758.5 L848.8 725.8 L857.2 758.5 L865.7 758.5 L874.1 742.2 L882.6 742.2 L891.1 725.8 L899.5 742.2 L908.0 774.9 L916.4 742.2 L924.9 742.2 L933.4 742.2 L941.8 742.2 L950.3 758.5 L958.7 758.5 L967.2 758.5 L975.7 758.5 L984.1 742.2 L992.6 742.2 L992.6 774.9 Z" fill="#6d4fbf" fill-opacity="0.5"/>
<circle cx="544.2" cy="742.2" r="4" fill="#6d4fbf" stroke="#fff" stroke-width="2"/>
<circle cx="552.7" cy="725.8" r="4" fill="#6d4fbf" stroke="#fff" stroke-width="2"/>
<circle cx="561.1" cy="774.9" r="4" fill="#6d4fbf" stroke="#fff" stroke-width="2"/>
<circle cx="569.6" cy="758.5" r="4" fill="#6d4fbf" stroke="#fff" stroke-width="2"/>
<circle cx="578.0" cy="742.2" r="4" fill="#6d4fbf" stroke="#fff" stroke-width="2"/>
<circle cx="586.5" cy="742.2" r="4" fill="#6d4fbf" stroke="#fff" stroke-width="2"/>
<circle cx="595.0" cy="758.5" r="4" fill="#6d4fbf" stroke="#fff" stroke-width="2"/>
<circle cx="603.4" cy="742.2" r="4" fill="#6d4fbf" stroke="#fff" stroke-width="2"/>
<circle cx="611.9" cy="742.2" r="4" fill="#6d4fbf" stroke="#fff" stroke-width="2"/>
<circle cx="620.3" cy="758.5" r="4" fill="#6d4fbf" stroke="#fff" stroke-width="2"/>
<circle cx="628.8" cy="742.2" r="4" fill="#6d4fbf" stroke="#fff" stroke-width="2"/>
<circle cx="637.3" cy="758.5" r="4" fill="#6d4fbf" stroke="#fff" stroke-width="2"/>
<circle cx="645.7" cy="742.2" r="4" fill="#6d4fbf" stroke="#fff" stroke-width="2"/>
<circle cx="654.2" cy="774.9" r="4" fill="#6d4fbf" stroke="#fff" stroke-width="2"/>
<circle cx="662.6" cy="742.2" r="4" fill="#6d4fbf" stroke="#fff" stroke-width="2"/>
<circle cx="671.1" cy="742.2" r="4" fill="#6d4fbf" stroke="#fff" stroke-width="2"/>
<circle cx="679.6" cy="774.9" r="4" fill="#6d4fbf" stroke="#fff" stroke-width="2"/>
<circle cx="688.0" cy="742.2" r="4" fill="#6d4fbf" stroke="#fff" stroke-width="2"/>
<circle cx="696.5" cy="758.5" r="4" fill="#6d4fbf" stroke="#fff" stroke-width="2"/>
<circle cx="704.9" cy="758.5" r="4" fill="#6d4fbf" stroke="#fff" stroke-width="2"/>
<circle cx="713.4" cy="774.9" r="4" fill="#6d4fbf" stroke="#fff" stroke-width="2"/>
<circle cx="721.9" cy="709.5" r="4" fill="#6d4fbf" stroke="#fff" stroke-width="2"/>
<circle cx="730.3" cy="725.8" r="4" fill="#6d4fbf" stroke="#fff" stroke-width="2"/>
<circle cx="738.8" cy="742.2" r="4" fill="#6d4fbf" stroke="#fff" stroke-width="2"/>
<circle cx="747.2" cy="742.2" r="4" fill="#6d4fbf" stroke="#fff" stroke-width="2"/>
<circle cx="755.7" cy="742.2" r="4" fill="#6d4fbf" stroke="#fff" stroke-width="2"/>
<circle cx="764.2" cy="742.2" r="4" fill="#6d4fbf" stroke="#fff" stroke-width="2"/>
<circle cx="772.6" cy="758.5" r="4" fill="#6d4fbf" stroke="#fff" stroke-width="2"/>
<circle cx="781.1" cy="725.8" r="4" fill="#6d4fbf" stroke="#fff" stroke-width="2"/>
<circle cx="789.5" cy="742.2" r="4" fill="#6d4fbf" stroke="#fff" stroke-width="2"/>
<circle cx="798.0" cy="709.5" r="4" fill="#6d4fbf" stroke="#fff" stroke-width="2"/>
<circle cx="806.5" cy="774.9" r="4" fill="#6d4fbf" stroke="#fff" stroke-width="2"/>
<circle cx="814.9" cy="725.8" r="4" fill="#6d4fbf" stroke="#fff" stroke-width="2"/>
<circle cx="823.4" cy="742.2" r="4" fill="#6d4fbf" stroke="#fff" stroke-width="2"/>
<circle cx="831.8" cy="742.2" r="4" fill="#6d4fbf" stroke="#fff" stroke-width="2"/>
<circle cx="840.3" cy="758.5" r="4" fill="#6d4fbf" stroke="#fff" stroke-width="2"/>
<circle cx="848.8" cy="725.8" r="4" fill="#6d4fbf" stroke="#fff" stroke-width="2"/>
<circle cx="857.2" cy="758.5" r="4" fill="#6d4fbf" stroke="#fff" stroke-width="2"/>
<circle cx="865.7" cy="758.5" r="4" fill="#6d4fbf" stroke="#fff" stroke-width="2"/>
<circle cx="874.1" cy="742.2" r="4" fill="#6d4fbf" stroke="#fff" stroke-width="2"/>
<circle cx="882.6" cy="742.2" r="4" fill="#6d4fbf" stroke="#fff" stroke-width="2"/>
<circle cx="891.1" cy="725.8" r="4" fill="#6d4fbf" stroke="#fff" stroke-width="2"/>
<circle cx="899.5" cy="742.2" r="4" fill="#6d4fbf" stroke="#fff" stroke-width="2"/>
<circle cx="908.0" cy="774.9" r="4" fill="#6d4fbf" stroke="#fff" stroke-width="2"/>
<circle cx="916.4" cy="742.2" r="4" fill="#6d4fbf" stroke="#fff" stroke-width="2"/>
<circle cx="924.9" cy="742.2" r="4" fill="#6d4fbf" stroke="#fff" stroke-width="2"/>
<circle cx="933.4" cy="742.2" r="4" fill="#6d4fbf" stroke="#fff" stroke-width="2"/>
<circle cx="941.8" cy="742.2" r="4" fill="#6d4fbf" stroke="#fff" stroke-width="2"/>
<circle cx="950.3" cy="758.5" r="4" fill="#6d4fbf" stroke="#fff" stroke-width="2"/>
<circle cx="958.7" cy="758.5" r="4" fill="#6d4fbf" stroke="#fff" stroke-width="2"/>
<circle cx="967.2" cy="758.5" r="4" fill="#6d4fbf" stroke="#fff" stroke-width="2"/>
<circle cx="975.7" cy="758.5" r="4" fill="#6d4fbf" stroke="#fff" stroke-width="2"/>
<circle cx="984.1" cy="742.2" r="4" fill="#6d4fbf" stroke="#fff" stroke-width="2"/>
<circle cx="992.6" cy="742.2" r="4" fill="#6d4fbf" stroke="#fff" stroke-width="2"/>
<path d="M544.2 774.9 L544.2 709.5 L552.7 725.8 L561.1 676.7 L569.6 693.1 L578.0 709.5 L586.5 709.5 L595.0 693.1 L603.4 709.5 L611.9 709.5 L620.3 693.1 L628.8 709.5 L637.3 693.1 L645.7 709.5 L654.2 676.7 L662.6 709.5 L671.1 709.5 L679.6 676.7 L688.0 709.5 L696.5 693.1 L704.9 693.1 L713.4 676.7 L721.9 742.2 L730.3 725.8 L738.8 709.5 L747.2 709.5 L755.7 709.5 L764.2 709.5 L772.6 693.1 L781.1 725.8 L789.5 709.5 L798.0 742.2 L806.5 676.7 L814.9 725.8 L823.4 709.5 L831.8 709.5 L840.3 693.1 L848.8 725.8 L857.2 693.1 L865.7 693.1 L874.1 709.5 L882.6 709.5 L891.1 725.8 L899.5 709.5 L908.0 676.7 L916.4 709.5 L924.9 709.5 L933.4 709.5 L941.8 709.5 L950.3 693.1 L958.7 693.1 L967.2 693.1 L975.7 693.1 L984.1 709.5 L992.6 709.5 L992.6 774.9 Z" fill="#ffa12b" fill-opacity="0.5"/>
<circle cx="544.2" cy="709.5" r="4" fill="#ffa12b" stroke="#fff" stroke-width="2"/>
<circle cx="552.7" cy="725.8" r="4" fill="#ffa12b" stroke="#fff" stroke-width="2"/>
<circle cx="561.1" cy="676.7" r="4" fill="#ffa12b" stroke="#fff" stroke-width="2"/>
<circle cx="569.6" cy="693.1" r="4" fill="#ffa12b" stroke="#fff" stroke-width="2"/>
<circle cx="578.0" cy="709.5" r="4" fill="#ffa12b" stroke="#fff" stroke-width="2"/>
<circle cx="586.5" cy="709.5" r="4" fill="#ffa12b" stroke="#fff" stroke-width="2"/>
<circle cx="595.0" cy="693.1" r="4" fill="#ffa12b" stroke="#fff" stroke-width="2"/>
<circle cx="603.4" cy="709.5" r="4" fill="#ffa12b" stroke="#fff" stroke-width="2"/>
<circle cx="611.9" cy="709.5" r="4" fill="#ffa12b" stroke="#fff" stroke-width="2"/>
<circle cx="620.3" cy="693.1" r="4" fill="#ffa12b" stroke="#fff" stroke-width="2"/>
<circle cx="628.8" cy="709.5" r="4" fill="#ffa12b" stroke="#fff" stroke-width="2"/>
<circle cx="637.3" cy="693.1" r="4" fill="#ffa12b" stroke="#fff" stroke-width="2"/>
<circle cx="645.7" cy="709.5" r="4" fill="#ffa12b" stroke="#fff" stroke-width="2"/>
<circle cx="654.2" cy="676.7" r="4" fill="#ffa12b" stroke="#fff" stroke-width="2"/>
<circle cx="662.6" cy="709.5" r="4" fill="#ffa12b" stroke="#fff" stroke-width="2"/>
<circle cx="671.1" cy="709.5" r="4" fill="#ffa12b" stroke="#fff" stroke-width="2"/>
<circle cx="679.6" cy="676.7" r="4" fill="#ffa12b" stroke="#fff" stroke-width="2"/>
<circle cx="688.0" cy="709.5" r="4" fill="#ffa12b" stroke="#fff" stroke-width="2"/>
<circle cx="696.5" cy="693.1" r="4" fill="#ffa12b" stroke="#fff" stroke-width="2"/>
<circle cx="704.9" cy="693.1" r="4" fill="#ffa12b" stroke="#fff" stroke-width="2"/>
<circle cx="713.4" cy="676.7" r="4" fill="#ffa12b" stroke="#fff" stroke-width="2"/>
<circle cx="721.9" cy="742.2" r="4" fill="#ffa12b" stroke="#fff" stroke-width="2"/>
<circle cx="730.3" cy="725.8" r="4" fill="#ffa12b" stroke="#fff" stroke-width="2"/>
<circle cx="738.8" cy="709.5" r="4" fill="#ffa12b" stroke="#fff" stroke-width="2"/>
<circle cx="747.2" cy="709.5" r="4" fill="#ffa12b" stroke="#fff" stroke-width="2"/>
<circle cx="755.7" cy="709.5" r="4" fill="#ffa12b" stroke="#fff" stroke-width="2"/>
<circle cx="764.2" cy="709.5" r="4" fill="#ffa12b" stroke="#fff" stroke-width="2"/>
<circle cx="772.6" cy="693.1" r="4" fill="#ffa12b" stroke="#fff" stroke-width="2"/>
<circle cx="781.1" cy="725.8" r="4" fill="#ffa12b" stroke="#fff" stroke-width="2"/>
<circle cx="789.5" cy="709.5" r="4" fill="#ffa12b" stroke="#fff" stroke-width="2"/>
<circle cx="798.0" cy="742.2" r="4" fill="#ffa12b" stroke="#fff" stroke-width="2"/>
<circle cx="806.5" cy="676.7" r="4" fill="#ffa12b" stroke="#fff" stroke-width="2"/>
<circle cx="814.9" cy="725.8" r="4" fill="#ffa12b" stroke="#fff" stroke-width="2"/>
<circle cx="823.4" cy="709.5" r="4" fill="#ffa12b" stroke="#fff" stroke-width="2"/>
<circle cx="831.8" cy="709.5" r="4" fill="#ffa12b" stroke="#fff" stroke-width="2"/>
<circle cx="840.3" cy="693.1" r="4" fill="#ffa12b" stroke="#fff" stroke-width="2"/>
<circle cx="848.8" cy="725.8" r="4" fill="#ffa12b" stroke="#fff" stroke-width="2"/>
<circle cx="857.2" cy="693.1" r="4" fill="#ffa12b" stroke="#fff" stroke-width="2"/>
<circle cx="865.7" cy="693.1" r="4" fill="#ffa12b" stroke="#fff" stroke-width="2"/>
<circle cx="874.1" cy="709.5" r="4" fill="#ffa12b" stroke="#fff" stroke-width="2"/>
<circle cx="882.6" cy="709.5" r="4" fill="#ffa12b" stroke="#fff" stroke-width="2"/>
<circle cx="891.1" cy="725.8" r="4" fill="#ffa12b" stroke="#fff" stroke-width="2"/>
<circle cx="899.5" cy="709.5" r="4" fill="#ffa12b" stroke="#fff" stroke-width="2"/>
<circle cx="908.0" cy="676.7" r="4" fill="#ffa12b" stroke="#fff" stroke-width="2"/>
<circle cx="916.4" cy="709.5" r="4" fill="#ffa12b" stroke="#fff" stroke-width="2"/>
<circle cx="924.9" cy="709.5" r="4" fill="#ffa12b" stroke="#fff" stroke-width="2"/>
<circle cx="933.4" cy="709.5" r="4" fill="#ffa12b" stroke="#fff" stroke-width="2"/>
<circle cx="941.8" cy="709.5" r="4" fill="#ffa12b" stroke="#fff" stroke-width="2"/>
<circle cx="950.3" cy="693.1" r="4" fill="#ffa12b" stroke="#fff" stroke-width="2"/>
<circle cx="958.7" cy="693.1" r="4" fill="#ffa12b" stroke="#fff" stroke-width="2"/>
<circle cx="967.2" cy="693.1" r="4" fill="#ffa12b" stroke="#fff" stroke-width="2"/>
<circle cx="975.7" cy="693.1" r="4" fill="#ffa12b" stroke="#fff" stroke-width="2"/>
<circle cx="984.1" cy="709.5" r="4" fill="#ffa12b" stroke="#fff" stroke-width="2"/>
<circle cx="992.6" cy="709.5" r="4" fill="#ffa12b" stroke="#fff" stroke-width="2"/>
</svg>
<div class="r" style="left:1021px;top:537px;width:296px;height:240px;background:#232733;border-radius:3px"></div>
<div class="t" style="left:1033.4px;top:552.3px;font-size:21.5px;line-height:21.5px;font-weight:bold;color:#fff;letter-spacing:-0.644px;">Open Issues by Top 5 C...</div>
<svg class="r" style="left:1288.2px;top:553.2px" width="16" height="16" viewBox="0 0 16 16"><circle cx="8" cy="8" r="7" fill="none" stroke="#e6e6e6" stroke-width="1.8"/><circle cx="8" cy="4.5" r="1.15" fill="#e6e6e6"/><rect x="7.1" y="6.5" width="1.8" height="5.6" fill="#e6e6e6"/></svg>
<svg class="r" style="left:1021px;top:537px" width="295" height="233" viewBox="1021 537 295 233">
<line x1="1130.6" y1="603.5" x2="1304.6" y2="603.5" stroke="#3a3f4a"/>
<line x1="1304.6" y1="603.5" x2="1304.6" y2="770" stroke="#3a3f4a"/>
<line x1="1130.6" y1="603.5" x2="1130.6" y2="770" stroke="#555a65"/>
<line x1="1124.5" y1="603.5" x2="1130.6" y2="603.5" stroke="#555a65"/>
<text x="1119.4" y="620.2" font-size="16" letter-spacing="-0.261" fill="#fff" text-anchor="end">assignee_5</text>
<rect x="1131" y="608.6" width="134.6" height="14" fill="#6d4fbf"/>
<line x1="1124.5" y1="628.4" x2="1130.6" y2="628.4" stroke="#555a65"/>
<text x="1119.4" y="645.1" font-size="16" letter-spacing="-0.261" fill="#fff" text-anchor="end">assignee_3</text>
<rect x="1131" y="633.5" width="125.9" height="14" fill="#6d4fbf"/>
<line x1="1124.5" y1="653.3" x2="1130.6" y2="653.3" stroke="#555a65"/>
<text x="1119.4" y="670.0" font-size="16" letter-spacing="-0.261" fill="#fff" text-anchor="end">assignee_4</text>
<rect x="1131" y="658.4" width="112.8" height="14" fill="#6d4fbf"/>
<line x1="1124.5" y1="678.2" x2="1130.6" y2="678.2" stroke="#555a65"/>
<text x="1119.4" y="694.9" font-size="16" letter-spacing="-0.261" fill="#fff" text-anchor="end">assignee_7</text>
<rect x="1131" y="683.3" width="104.0" height="14" fill="#6d4fbf"/>
<line x1="1124.5" y1="703.1" x2="1130.6" y2="703.1" stroke="#555a65"/>
<text x="1119.4" y="719.8" font-size="16" letter-spacing="-0.261" fill="#fff" text-anchor="end">assignee_1</text>
<rect x="1131" y="708.2" width="99.7" height="14" fill="#6d4fbf"/>
<line x1="1124.5" y1="728.0" x2="1130.6" y2="728.0" stroke="#555a65"/>
<text x="1119.4" y="744.7" font-size="16" letter-spacing="-0.261" fill="#fff" text-anchor="end">assignee_2</text>
<rect x="1131" y="733.1" width="91.0" height="14" fill="#6d4fbf"/>
<line x1="1124.5" y1="752.9" x2="1130.6" y2="752.9" stroke="#555a65"/>
<text x="1119.4" y="769.6" font-size="16" letter-spacing="-0.261" fill="#fff" text-anchor="end">assignee_9</text>
<rect x="1131" y="758.0" width="86.3" height="14" fill="#6d4fbf"/>
</svg>
</body></html>
